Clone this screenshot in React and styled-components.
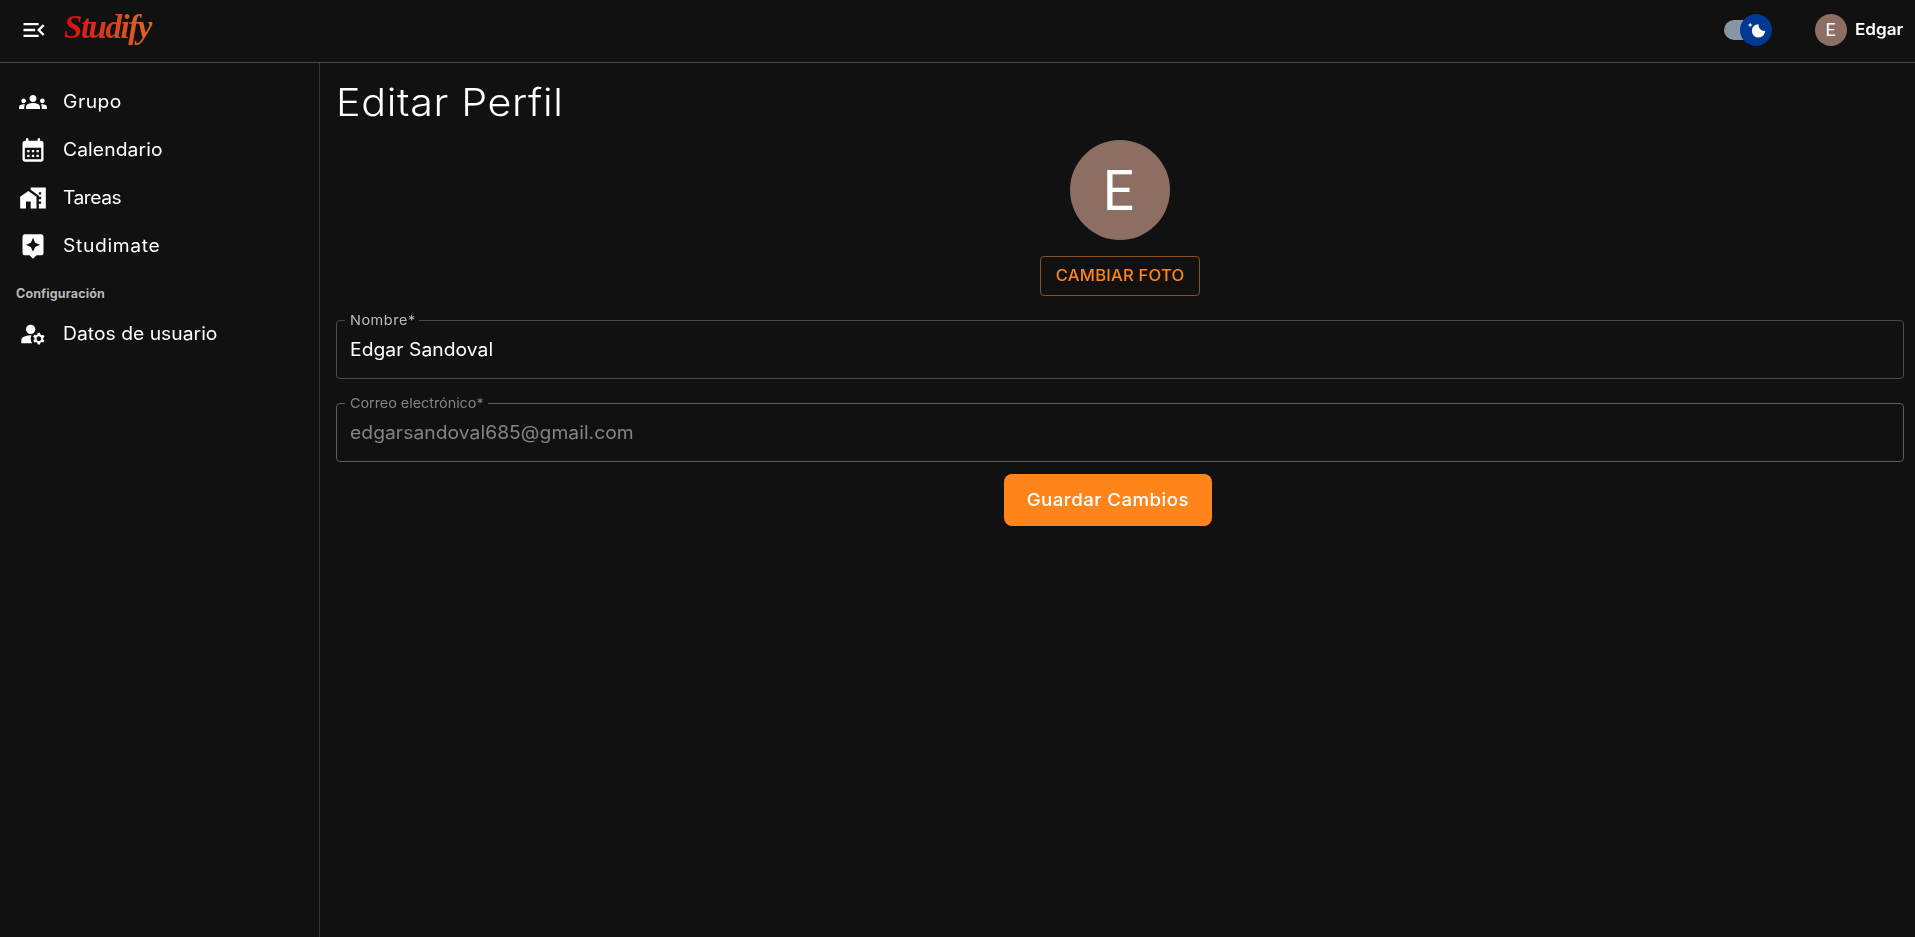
import React from "react";
import styled, { createGlobalStyle } from "styled-components";
import {
  MdMenuOpen,
  MdGroups,
  MdCalendarMonth,
  MdHomeWork,
  MdAssistant,
  MdManageAccounts,
} from "react-icons/md";

const GlobalStyle = createGlobalStyle`
  *, *::before, *::after { box-sizing: border-box; }
  body {
    margin: 0;
    background: #111111;
    color: #ffffff;
    font-family: Inter, "Open Sans", sans-serif;
    overflow: hidden;
  }
  button { font-family: inherit; }
`;

/* Slightly extended lettering, used for all interface text. */
const WideText = styled.span`
  display: inline-block;
  white-space: nowrap;
  letter-spacing: ${(p) => p.$spacing || 0}px;
  transform: scaleX(1.07);
  transform-origin: ${(p) => p.$origin || "left"} center;
`;

const Page = styled.div`
  display: flex;
  flex-direction: column;
  height: 100vh;
`;

const Header = styled.header`
  display: flex;
  align-items: center;
  flex: none;
  height: 63px;
  padding: 0 11px 3px 20px;
  border-bottom: 1px solid #474747;
`;

const MenuButton = styled.button`
  display: flex;
  padding: 0;
  border: 0;
  background: none;
  color: #ffffff;
  svg { width: 28px; height: 28px; }
`;

const Logo = styled.div`
  margin: -6px 0 0 7.5px;
  padding: 0 8px;
  font: italic 600 34px/48px "Liberation Serif", serif;
  letter-spacing: -1.5px;
  transform: scaleX(0.97);
  transform-origin: 8px 50%;
  background: linear-gradient(90deg, #e30613 8px, #d9381a 45%, #e0642a 90%);
  background-clip: text;
  -webkit-background-clip: text;
  color: transparent;
`;

const HeaderActions = styled.div`
  display: flex;
  align-items: center;
  gap: 51px;
  margin-left: auto;
`;

const Switch = styled.div`
  display: flex;
  align-items: center;
  justify-content: flex-end;
  width: 40px;
  height: 20px;
  border-radius: 10px;
  background: #8796a5;
`;

const SwitchThumb = styled.div`
  display: flex;
  align-items: center;
  justify-content: center;
  flex: none;
  width: 32px;
  height: 32px;
  margin-right: -8px;
  border-radius: 50%;
  background: #003892;
`;

const UserChip = styled.div`
  display: flex;
  align-items: center;
  gap: 8px;
  width: 89px;
`;

const Avatar = styled.div`
  display: flex;
  align-items: center;
  justify-content: center;
  flex: none;
  width: ${(p) => p.$size}px;
  height: ${(p) => p.$size}px;
  padding: 2px ${(p) => p.$size * 0.03}px 0 0;
  border-radius: 50%;
  background: #8d6e63;
  font-family: Roboto, sans-serif;
  font-size: ${(p) => p.$size * 0.55}px;
  line-height: 1;
`;

const UserName = styled.div`
  margin-top: -2px;
  font-size: 16px;
  font-weight: 600;
`;

const Body = styled.div`
  display: flex;
  flex: 1;
`;

const Sidebar = styled.nav`
  flex: none;
  width: 320px;
  padding-top: 14.5px;
  border-right: 1px solid #363636;
`;

const NavItem = styled.a`
  display: flex;
  align-items: center;
  gap: 16px;
  height: 48px;
  padding-left: 18.5px;
  font-size: 18px;
  svg { width: 28px; height: 28px; flex: none; }
`;

const NavHeading = styled.div`
  height: 40px;
  padding-left: 16px;
  font-size: 12.5px;
  font-weight: 700;
  line-height: 47px;
  letter-spacing: 0.13px;
  color: #b8b8b8;
`;

const Content = styled.main`
  display: flex;
  flex-direction: column;
  flex: 1;
  padding: 16px 11px 0 16px;
`;

const Title = styled.h1`
  margin: 0;
  font-size: 38.5px;
  font-weight: 350;
  line-height: 47px;
`;

const PhotoBlock = styled.section`
  display: flex;
  flex-direction: column;
  align-items: center;
  gap: 16px;
  margin: 14px 0 24px;
`;

const OutlineButton = styled.button`
  width: 160px;
  height: 40px;
  padding: 0 0 2px;
  border: 1px solid #8c5022;
  border-radius: 4px;
  background: none;
  color: #ff851b;
  font-size: 15.5px;
  font-weight: 500;
`;

const Field = styled.div`
  position: relative;
  display: flex;
  align-items: center;
  height: 59px;
  margin-bottom: ${(p) => (p.$last ? 12 : 24)}px;
  padding-left: 12.5px;
  border: 1px solid ${(p) => (p.$disabled ? "#5c5c5c" : "#4b4b4b")};
  border-radius: 4px;
  color: ${(p) => (p.$disabled ? "#848484" : "#ffffff")};
  font-size: 18px;
`;

const FieldLabel = styled.label`
  position: absolute;
  top: -9px;
  left: 8px;
  width: ${(p) => p.$width}px;
  padding-left: 4.5px;
  background: #111111;
  color: ${(p) => (p.$disabled ? "#848484" : "#bcbcbc")};
  font-size: 13.5px;
  line-height: 17px;
`;

const SaveButton = styled.button`
  align-self: center;
  width: 208px;
  height: 52px;
  margin-right: 24px;
  padding: 0 0 2px;
  border: 0;
  border-radius: 8px;
  background: #ff851b;
  color: #ffffff;
  font-size: 17.5px;
  font-weight: 500;
`;

const NAV_ITEMS = [
  { label: "Grupo", icon: MdGroups, spacing: 0.48 },
  { label: "Calendario", icon: MdCalendarMonth, spacing: 0.1 },
  { label: "Tareas", icon: MdHomeWork, spacing: -0.45 },
  { label: "Studimate", icon: MdAssistant, spacing: 0.62 },
];

function NavLink({ icon: Icon, label, spacing }) {
  return (
    <NavItem>
      <Icon />
      <WideText $spacing={spacing}>{label}</WideText>
    </NavItem>
  );
}

function TextField({ label, value, labelWidth, labelSpacing, disabled, last }) {
  return (
    <Field $disabled={disabled} $last={last}>
      <FieldLabel $width={labelWidth} $disabled={disabled}>
        <WideText $spacing={labelSpacing}>{label}*</WideText>
      </FieldLabel>
      <WideText $spacing={0.05}>{value}</WideText>
    </Field>
  );
}

export default function App() {
  return (
    <Page>
      <GlobalStyle />
      <Header>
        <MenuButton aria-label="Menú">
          <MdMenuOpen />
        </MenuButton>
        <Logo>Studify</Logo>
        <HeaderActions>
          <Switch>
            <SwitchThumb>
              <svg width="20" height="20" viewBox="0 0 20 20" fill="#fff">
                <path d="M4.2 2.5l-.7 1.8-1.8.7 1.8.7.7 1.8.6-1.8L6.7 5l-1.9-.7-.6-1.8zm15 8.3a6.7 6.7 0 11-6.6-6.6 5.8 5.8 0 006.6 6.6z" />
              </svg>
            </SwitchThumb>
          </Switch>
          <UserChip>
            <Avatar $size={32}>E</Avatar>
            <UserName>
              <WideText>Edgar</WideText>
            </UserName>
          </UserChip>
        </HeaderActions>
      </Header>
      <Body>
        <Sidebar>
          {NAV_ITEMS.map((item) => (
            <NavLink key={item.label} {...item} />
          ))}
          <NavHeading>Configuración</NavHeading>
          <NavLink icon={MdManageAccounts} label="Datos de usuario" spacing={0.03} />
        </Sidebar>
        <Content>
          <Title>
            <WideText $spacing={0.62}>Editar Perfil</WideText>
          </Title>
          <PhotoBlock>
            <Avatar $size={100}>E</Avatar>
            <OutlineButton>
              <WideText $spacing={0.2} $origin="center">CAMBIAR FOTO</WideText>
            </OutlineButton>
          </PhotoBlock>
          <TextField label="Nombre" value="Edgar Sandoval" labelWidth={74} labelSpacing={0.5} />
          <TextField
            label="Correo electrónico"
            value="edgarsandoval685@gmail.com"
            labelWidth={143}
            labelSpacing={-0.05}
            disabled
            last
          />
          <SaveButton>
            <WideText $spacing={0.4} $origin="center">Guardar Cambios</WideText>
          </SaveButton>
        </Content>
      </Body>
    </Page>
  );
}
